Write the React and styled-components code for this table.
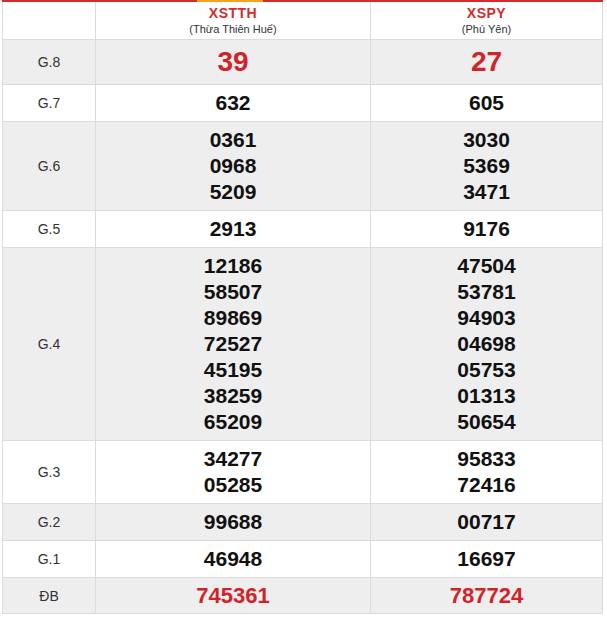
import styled, { createGlobalStyle } from 'styled-components'

const GlobalStyle = createGlobalStyle`
    body {
        margin: 0;
        background: #fff;
        font-family: "Liberation Sans", Arimo, Arial, sans-serif;
    }
`

const Wrap = styled.div`
    position: relative;
    width: 600px;
    margin-left: 2px;
    font-family: "Liberation Sans", Arimo, Arial, sans-serif;
`

const TabMark = styled.div`
    position: absolute;
    top: 0;
    left: 195px;
    width: 66px;
    height: 2px;
    background: #f7a21b;
`

const Table = styled.table`
    width: 600px;
    border-collapse: collapse;
    table-layout: fixed;
    border-top: 2px solid #d52b2b;
    font-family: "Liberation Sans", Arimo, Arial, sans-serif;
`

const Cell = styled.td`
    border: 1px solid #dcdcdc;
    text-align: center;
    vertical-align: middle;
    padding: 5px 0;
    background: ${(p) => (p.$shade ? '#eeeeee' : '#ffffff')};
`

const HeadCell = styled(Cell)`
    padding: 2px 0 3px;
    background: #fff;
`

const Province = styled.div`
    color: #d52b2b;
    font-weight: bold;
    font-size: 14px;
    line-height: 18px;
    letter-spacing: 0.5px;
`

const Region = styled.div`
    color: #333;
    font-size: 11px;
    line-height: 14px;
`

const Label = styled.span`
    color: #333;
    font-size: 14px;
`

const Num = styled.div`
    font-weight: bold;
    font-size: ${(p) => p.$size}px;
    line-height: ${(p) => p.$lh}px;
    color: ${(p) => (p.$red ? '#d1232a' : '#111')};
`

const rows = [
    { label: 'G.8', a: ['39'], b: ['27'], size: 28, lh: 34, red: true },
    { label: 'G.7', a: ['632'], b: ['605'] },
    { label: 'G.6', a: ['0361', '0968', '5209'], b: ['3030', '5369', '3471'] },
    { label: 'G.5', a: ['2913'], b: ['9176'] },
    {
        label: 'G.4',
        a: ['12186', '58507', '89869', '72527', '45195', '38259', '65209'],
        b: ['47504', '53781', '94903', '04698', '05753', '01313', '50654'],
    },
    { label: 'G.3', a: ['34277', '05285'], b: ['95833', '72416'] },
    { label: 'G.2', a: ['99688'], b: ['00717'] },
    { label: 'G.1', a: ['46948'], b: ['16697'] },
    { label: 'ĐB', a: ['745361'], b: ['787724'], size: 22, lh: 25, red: true },
]

const App = () => {
    return (
        <Wrap>
            <GlobalStyle />
            <TabMark />
            <Table>
                <colgroup>
                    <col style={{ width: 93 }} />
                    <col style={{ width: 275 }} />
                    <col style={{ width: 232 }} />
                </colgroup>
                <tbody>
                    <tr>
                        <HeadCell />
                        <HeadCell>
                            <Province>XSTTH</Province>
                            <Region>(Thừa Thiên Huế)</Region>
                        </HeadCell>
                        <HeadCell>
                            <Province>XSPY</Province>
                            <Region>(Phú Yên)</Region>
                        </HeadCell>
                    </tr>
                    {rows.map((r, i) => (
                        <tr key={r.label}>
                            <Cell $shade={i % 2 === 0}>
                                <Label>{r.label}</Label>
                            </Cell>
                            {[r.a, r.b].map((list, j) => (
                                <Cell key={j} $shade={i % 2 === 0}>
                                    {list.map((n) => (
                                        <Num key={n} $size={r.size || 21} $lh={r.lh || 26} $red={r.red}>
                                            {n}
                                        </Num>
                                    ))}
                                </Cell>
                            ))}
                        </tr>
                    ))}
                </tbody>
            </Table>
        </Wrap>
    )
}

export default App
